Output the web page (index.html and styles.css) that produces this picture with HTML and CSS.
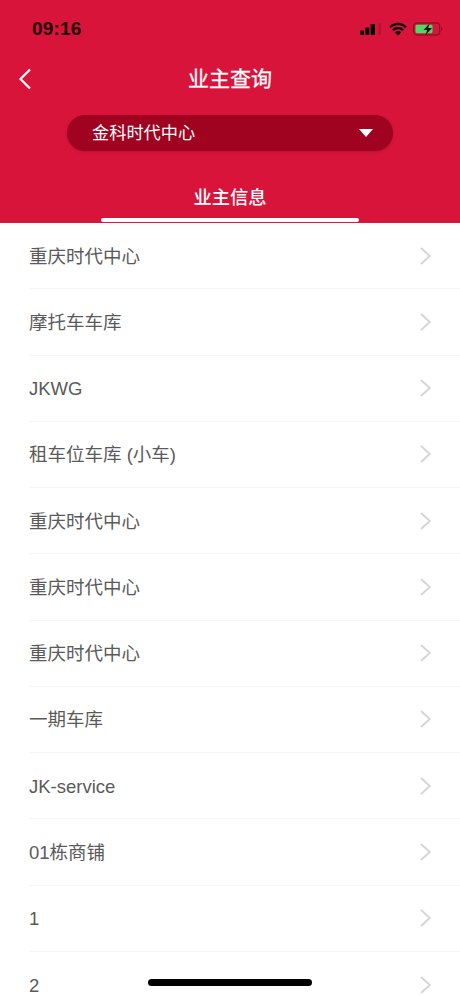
FILE: index.html
```html
<!DOCTYPE html>
<html lang="zh">
<head>
<meta charset="utf-8">
<title>业主查询</title>
<link rel="stylesheet" href="styles.css">
</head>
<body>
<div class="screen">
  <header class="head">
    <div class="status">
      <span class="time">09:16</span>
      <span class="status-icons">
        <svg class="sig" width="24" height="14" viewBox="0 0 24 14"><rect x="1" y="8.500" width="4" height="4.500" rx=".8"/><rect x="6.300" y="5.500" width="4" height="7.500" rx=".8"/><rect x="11.600" y="2" width="4.400" height="11" rx=".8"/><rect x="19.500" y="1" width="2.500" height="12" rx=".8" fill="#000" opacity=".14"/></svg>
        <svg class="wifi" width="18" height="14" viewBox="0 0 18 14"><path d="M1 5.200a11.500 11.500 0 0 1 16 0M3.700 8.200a7.600 7.600 0 0 1 10.600 0" fill="none" stroke="#0a0005" stroke-width="2.200"/><path d="M5.900 10.300a4.400 4.400 0 0 1 6.200 0L9 13.500z" fill="#0a0005"/></svg>
        <svg class="batt" width="30" height="14" viewBox="0 0 30 14"><rect x=".7" y="1" width="26" height="12" rx="3.200" fill="none" stroke="#8f1028" stroke-width="1.300"/><rect x="2.500" y="2.800" width="17" height="8.400" rx="1.400" fill="#4cd964"/><path d="M16.500 1.500 10.500 8h3.600l-1.400 4.800L19 6h-3.800z" fill="#16090c"/><path d="M28 5v4c1-.4 1.400-1.100 1.400-2S29 5.400 28 5z" fill="#8f1028"/></svg>
      </span>
    </div>
    <div class="nav">
      <svg class="back" width="14" height="22" viewBox="0 0 14 22"><path d="M12 1.500 2.500 11 12 20.500" fill="none" stroke="#fff" stroke-width="2.200"/></svg>
      <h1 class="title">业主查询</h1>
    </div>
    <div class="select">
      <span>金科时代中心</span>
      <svg class="caret" width="14" height="8" viewBox="0 0 14 8"><path d="M0 0h14L7 8z" fill="#fff"/></svg>
    </div>
    <div class="tab">
      <span class="tab-label">业主信息</span>
      <span class="tab-line"></span>
    </div>
  </header>
  <ul class="list">
    <li class="row"><span class="row-text">重庆时代中心</span><svg class="chev" width="11" height="18" viewBox="0 0 11 18"><path d="M1 1 9.800 9 1 17"/></svg></li>
    <li class="row"><span class="row-text">摩托车车库</span><svg class="chev" width="11" height="18" viewBox="0 0 11 18"><path d="M1 1 9.800 9 1 17"/></svg></li>
    <li class="row"><span class="row-text">JKWG</span><svg class="chev" width="11" height="18" viewBox="0 0 11 18"><path d="M1 1 9.800 9 1 17"/></svg></li>
    <li class="row"><span class="row-text">租车位车库 (小车)</span><svg class="chev" width="11" height="18" viewBox="0 0 11 18"><path d="M1 1 9.800 9 1 17"/></svg></li>
    <li class="row"><span class="row-text">重庆时代中心</span><svg class="chev" width="11" height="18" viewBox="0 0 11 18"><path d="M1 1 9.800 9 1 17"/></svg></li>
    <li class="row"><span class="row-text">重庆时代中心</span><svg class="chev" width="11" height="18" viewBox="0 0 11 18"><path d="M1 1 9.800 9 1 17"/></svg></li>
    <li class="row"><span class="row-text">重庆时代中心</span><svg class="chev" width="11" height="18" viewBox="0 0 11 18"><path d="M1 1 9.800 9 1 17"/></svg></li>
    <li class="row"><span class="row-text">一期车库</span><svg class="chev" width="11" height="18" viewBox="0 0 11 18"><path d="M1 1 9.800 9 1 17"/></svg></li>
    <li class="row"><span class="row-text">JK-service</span><svg class="chev" width="11" height="18" viewBox="0 0 11 18"><path d="M1 1 9.800 9 1 17"/></svg></li>
    <li class="row"><span class="row-text">01栋商铺</span><svg class="chev" width="11" height="18" viewBox="0 0 11 18"><path d="M1 1 9.800 9 1 17"/></svg></li>
    <li class="row"><span class="row-text">1</span><svg class="chev" width="11" height="18" viewBox="0 0 11 18"><path d="M1 1 9.800 9 1 17"/></svg></li>
    <li class="row"><span class="row-text">2</span><svg class="chev" width="11" height="18" viewBox="0 0 11 18"><path d="M1 1 9.800 9 1 17"/></svg></li>
  </ul>
  <div class="home-bar"></div>
</div>
</body>
</html>
```
FILE: styles.css
```css
* { box-sizing: border-box; }
html, body { margin: 0; padding: 0; height: 100%; overflow: hidden; background: #fff; }
body { font-family: "Liberation Sans", "Noto Sans CJK SC", sans-serif; }
.screen { position: relative; width: 460px; height: 996px; overflow: hidden; }
.head { background: #d9143b; height: 223px; display: flex; flex-direction: column; }
.status { height: 58px; padding: 17px 17px 0 32px; display: flex; justify-content: space-between; align-items: flex-start; }
.time { font-size: 19px; line-height: 24px; font-weight: 700; color: #22020a; letter-spacing: .2px; }
.status-icons { display: flex; align-items: center; gap: 6px; height: 24px; }
.sig { fill: #0a0005; }
.nav { position: relative; height: 42px; display: flex; align-items: center; justify-content: center; }
.back { position: absolute; left: 18px; top: 10px; }
.title { margin: 0; font-size: 21px; font-weight: 400; color: #fff; line-height: 42px; -webkit-text-stroke: .3px #fff; }
.select { margin: 15px 67px 0; height: 36px; border-radius: 18px; background: #a00320; color: #fff; display: flex; align-items: center; justify-content: space-between; padding: 0 20px 0 25px; font-size: 17.200px; line-height: 24px; box-shadow: 0 1px 3px rgba(90,0,20,.25); }
.tab { flex: 1; display: flex; flex-direction: column; align-items: center; justify-content: flex-end; }
.tab-label { font-size: 18.250px; line-height: 24px; color: #fff; font-weight: 500; margin-bottom: 8px; }
.tab-line { width: 258px; height: 4px; border-radius: 2px; background: #fff; margin-bottom: 1px; }
.list { list-style: none; margin: 0; padding: 0; }
.row { height: 66.250px; margin-left: 29px; padding-right: 29px; display: flex; align-items: center; justify-content: space-between; border-bottom: 1px solid #f6f6f6; font-size: 18.500px; line-height: 26px; color: #5a5a5a; }
.row:last-child { border-bottom: 0; }
.row-text { padding-top: 2px; }
.chev { fill: none; stroke: #d6d6d6; stroke-width: 2; }
.home-bar { position: absolute; left: 148px; top: 979px; width: 164px; height: 7px; border-radius: 4px; background: #000; }
```
